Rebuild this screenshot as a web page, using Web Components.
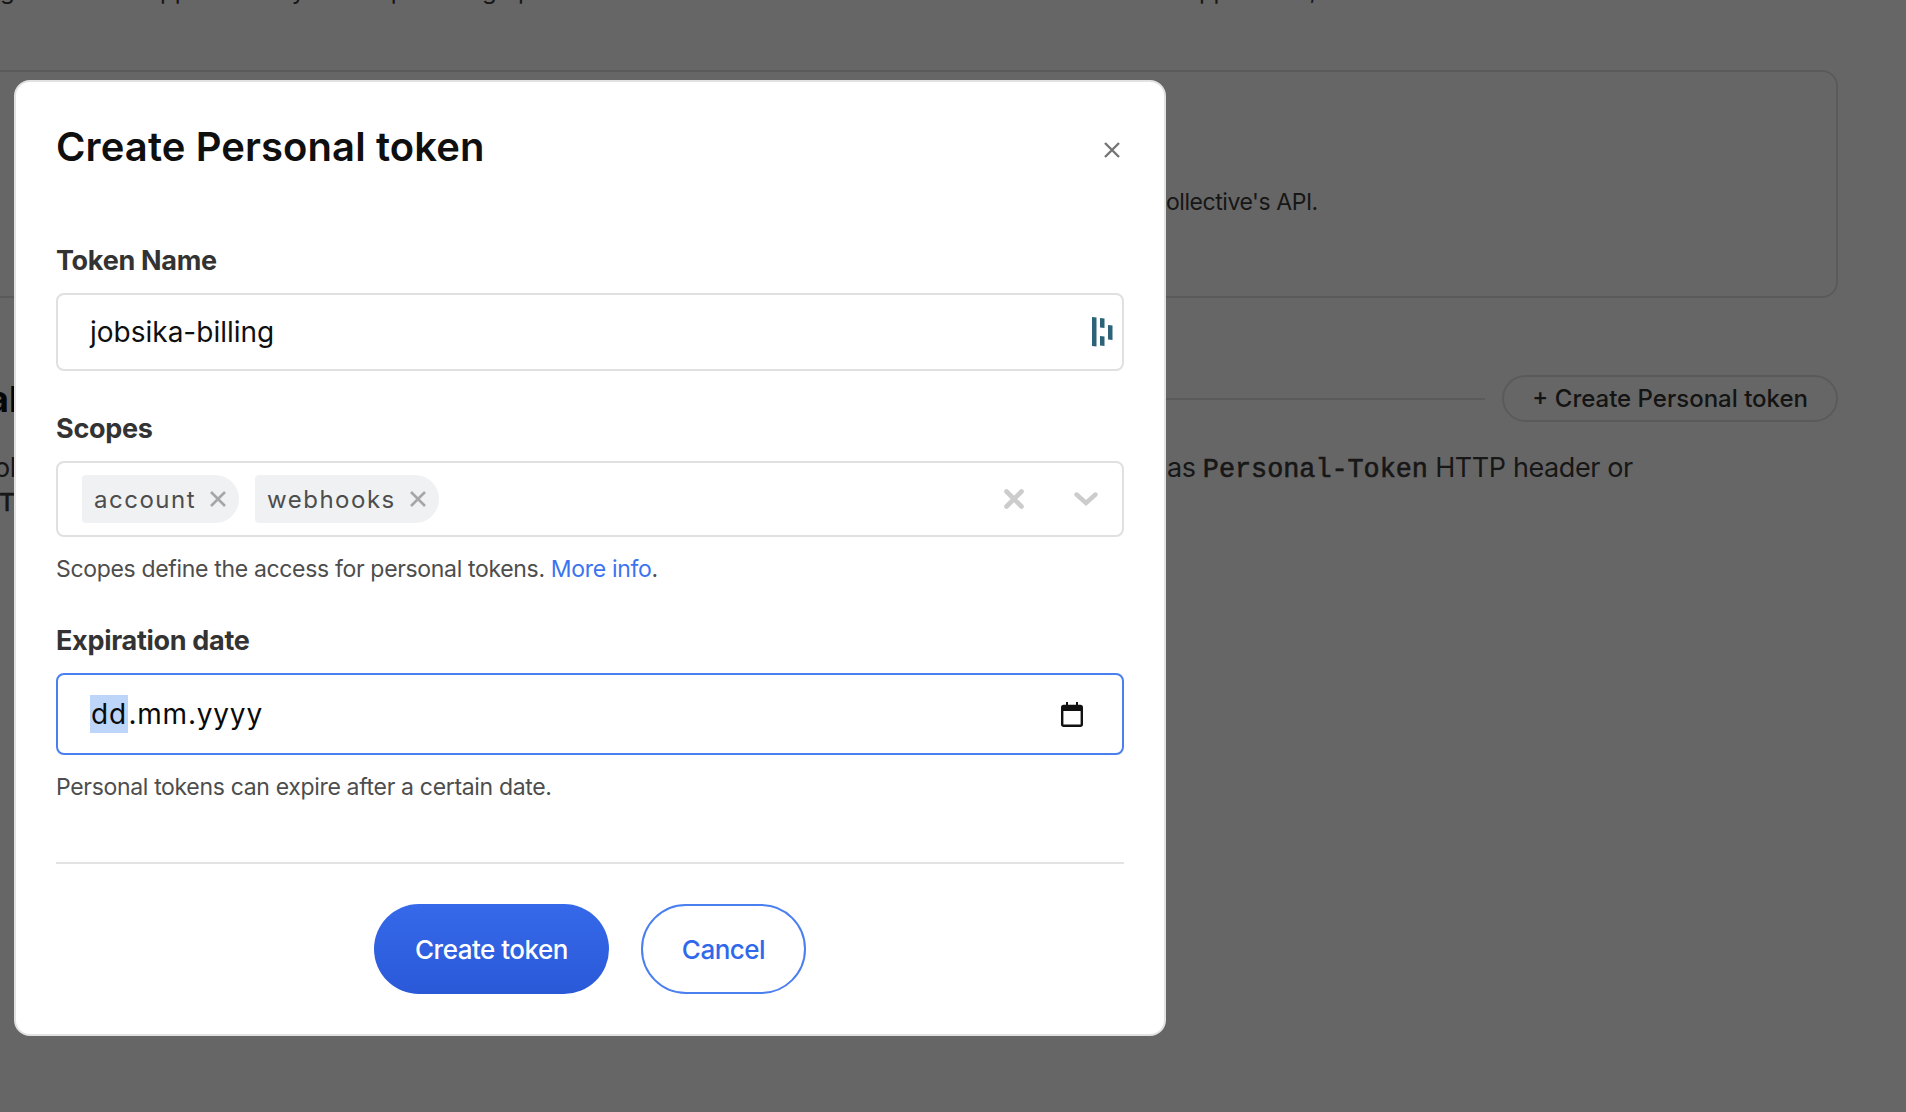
<!DOCTYPE html>
<html>
<head>
<meta charset="utf-8">
<title>Create Personal token</title>
<style>
    html, body { margin: 0; height: 100%; overflow: hidden; background: #fff; }
    body { font-family: Inter, "Liberation Sans", sans-serif; }
    a { color: #3c74ef; text-decoration: none; }
</style>
</head>
<body>
<settings-page></settings-page>
<modal-overlay>
    <token-dialog heading="Create Personal token">
        <form-field label="Token Name">
            <text-box value="jobsika-billing"></text-box>
        </form-field>
        <form-field label="Scopes" style="--gap-top: 40px">
            <scope-select></scope-select>
            <span slot="hint">Scopes define the access for personal tokens. <a href="#">More info</a>.</span>
        </form-field>
        <form-field label="Expiration date" style="--gap-top: 38px">
            <date-box></date-box>
            <span slot="hint">Personal tokens can expire after a certain date.</span>
        </form-field>
    </token-dialog>
</modal-overlay>

<script>
class SettingsPage extends HTMLElement{
    constructor(){
        super()
        this.shadow = this.attachShadow({ mode: "open" })
        this.shadow.innerHTML = `
        <style>
            :host {
                display: block;
                height: 1112px;
                overflow: hidden;
                font-family: Inter, "Liberation Sans", sans-serif;
                color: #3a3a3a;
                font-size: 24px;
                letter-spacing: -0.4px;
            }
            .inner { width: 1838px; margin-top: -27px; }
            .intro { line-height: 36px; white-space: nowrap; letter-spacing: 0; }
            .intro a { color: #5a5fd0; }
            .card {
                margin: 61px 0 0 -60px;
                height: 228px;
                box-sizing: border-box;
                border: 2px solid #e1e1e1;
                border-radius: 16px;
                padding: 112px 0 0 1224px;
                line-height: 36px;
                font-size: 23px;
                letter-spacing: -0.45px;
            }
            .head {
                display: grid;
                grid-template-columns: 1166px 1fr auto;
                align-items: center;
                column-gap: 17px;
                margin-top: 77px;
            }
            .head h2 { margin: 0 0 0 -12px; font-size: 36px; font-weight: 700; color: #111; letter-spacing: 0; }
            .head .line { height: 2px; background: #e1e1e1; margin-left: -17px; }
            .add {
                height: 47px;
                box-sizing: border-box;
                padding: 0 28px;
                display: flex;
                align-items: center;
                border: 2px solid #e1e1e1;
                border-radius: 30px;
                font-weight: 500;
                letter-spacing: 0;
                white-space: nowrap;
                color: #333;
            }
            .row {
                display: grid;
                grid-template-columns: 1167px 1fr;
                line-height: 38px;
                margin-top: 27px;
                font-size: 27px;
                letter-spacing: -0.4px;
            }
            .row span.ol { margin-left: -6px; }
            .tail { white-space: nowrap; }
            code {
                font-family: "Liberation Mono", monospace;
                font-size: 26.8px;
                letter-spacing: 0;
                -webkit-text-stroke: 0.6px currentColor;
            }
            .next { line-height: 28px; margin-left: -1px; }
        </style>
        <div class="inner">
            <div class="intro">g to build an application by others providing open source code. Create a new token to let others use this application, then <a>read the docs</a></div>
            <div class="card">ollective's API.</div>
            <div class="head"><h2>al</h2><div class="line"></div><div class="add">+ Create Personal token</div></div>
            <div class="row"><span class="ol">ol</span><span class="tail">as <code>Personal-Token</code> HTTP header or</span></div>
            <div class="next"><code>T</code></div>
        </div>
        `
    }
}
customElements.define("settings-page", SettingsPage)

class ModalOverlay extends HTMLElement{
    constructor(){
        super()
        this.shadow = this.attachShadow({ mode: "open" })
        this.shadow.innerHTML = `
        <style>
            :host {
                position: fixed;
                inset: 0;
                background: rgba(0, 0, 0, 0.6);
                display: block;
                padding: 80px 0 0 14px;
                box-sizing: border-box;
            }
        </style>
        <slot></slot>
        `
    }
}
customElements.define("modal-overlay", ModalOverlay)

class TokenDialog extends HTMLElement{
    constructor(){
        super()
        this.shadow = this.attachShadow({ mode: "open" })
        this.shadow.innerHTML = `
        <style>
            :host {
                display: block;
                width: 1152px;
                height: 956px;
                box-sizing: border-box;
                background: #fff;
                border: 2px solid #e2e2e2;
                border-radius: 16px;
                padding: 0 40px;
                font-family: Inter, "Liberation Sans", sans-serif;
            }
            header { display: flex; justify-content: space-between; height: 161px; padding-top: 41px; box-sizing: border-box; }
            h1 { margin: 0; font-size: 40px; line-height: 48px; font-weight: 600; color: #0f0f0f; letter-spacing: 0.1px; }
            .close { margin: 19px 4px 0 0; width: 16px; height: 16px; }
            .fields { height: 621px; border-bottom: 2px solid #e3e3e3; box-sizing: border-box; }
            footer { display: flex; justify-content: center; gap: 32px; padding-top: 40px; }
            .btn {
                height: 90px;
                box-sizing: border-box;
                border-radius: 45px;
                display: flex;
                align-items: center;
                font-size: 26px;
                font-weight: 500;
                letter-spacing: -0.5px;
            }
            .primary { width: 235px; justify-content: center; color: #fff; background: linear-gradient(180deg, #3569ea, #2a59d8); }
            .secondary { width: 165px; justify-content: center; color: #3068ec; border: 2px solid #4a7ff0; background: #fff; }
        </style>
        <header>
            <h1></h1>
            <svg class="close" viewBox="0 0 16 16" fill="none" stroke="#757575" stroke-width="2.4"><path d="M1 1l14 14M15 1L1 15"/></svg>
        </header>
        <div class="fields"><slot></slot></div>
        <footer>
            <div class="btn primary">Create token</div>
            <div class="btn secondary">Cancel</div>
        </footer>
        `
    }

    connectedCallback(){
        this.shadow.querySelector("h1").textContent = this.getAttribute("heading")
    }
}
customElements.define("token-dialog", TokenDialog)

class FormField extends HTMLElement{
    constructor(){
        super()
        this.shadow = this.attachShadow({ mode: "open" })
        this.shadow.innerHTML = `
        <style>
            :host { display: block; padding-top: var(--gap-top, 0); }
            label {
                display: block;
                font-size: 27px;
                line-height: 36px;
                font-weight: 700;
                color: #333;
                letter-spacing: -0.3px;
                margin-bottom: 14px;
            }
            .hint {
                margin-top: 16px;
                font-size: 23px;
                line-height: 32px;
                color: #4d4d4d;
                letter-spacing: -0.33px;
            }
        </style>
        <label></label>
        <slot></slot>
        <div class="hint"><slot name="hint"></slot></div>
        `
    }

    connectedCallback(){
        this.shadow.querySelector("label").textContent = this.getAttribute("label")
        // fields without a hint shouldn't keep its margin
        if(!this.querySelector('[slot="hint"]')) this.shadow.querySelector(".hint").remove()
    }
}
customElements.define("form-field", FormField)

class TextBox extends HTMLElement{
    constructor(){
        super()
        this.shadow = this.attachShadow({ mode: "open" })
        this.shadow.innerHTML = `
        <style>
            :host {
                display: flex;
                align-items: center;
                justify-content: space-between;
                height: 78px;
                box-sizing: border-box;
                border: 2px solid #e0e0e0;
                border-radius: 8px;
                padding: 0 9px 0 32px;
                font-size: 28px;
                color: #0f0f0f;
            }
        </style>
        <span class="value"></span>
        <svg width="21" height="30" viewBox="0 0 21 30" fill="#2d6379">
            <path d="M0 0l4.500 .6V29.500L0 29zM8 1l4.500 .6V11L8 10.500zM8 19l4.500 .6V29L8 28.500zM16 8l4.500 .6V23L16 22.500z"/>
        </svg>
        `
    }

    connectedCallback(){
        this.shadow.querySelector(".value").textContent = this.getAttribute("value")
    }
}
customElements.define("text-box", TextBox)

class ScopeTag extends HTMLElement{
    constructor(){
        super()
        this.shadow = this.attachShadow({ mode: "open" })
        this.shadow.innerHTML = `
        <style>
            :host {
                display: flex;
                align-items: center;
                height: 48px;
                padding: 0 13px 0 12px;
                gap: 14px;
                background: #f0f1f3;
                border-radius: 4px 24px 24px 4px;
                font-size: 24px;
                letter-spacing: 1.5px;
                color: #4d4d4d;
            }
        </style>
        <slot></slot>
        <svg width="16" height="16" viewBox="0 0 16 16" fill="none" stroke="#a6a6a6" stroke-width="2.6"><path d="M1 1l14 14M15 1L1 15"/></svg>
        `
    }
}
customElements.define("scope-tag", ScopeTag)

class ScopeSelect extends HTMLElement{
    constructor(){
        super()
        this.shadow = this.attachShadow({ mode: "open" })
        this.shadow.innerHTML = `
        <style>
            :host {
                display: flex;
                align-items: center;
                height: 76px;
                box-sizing: border-box;
                border: 2px solid #e0e0e0;
                border-radius: 8px;
                padding: 0 24px 0 24px;
                gap: 16px;
            }
            .spacer { flex: 1; }
            .x { margin-right: 34px; }
        </style>
        <scope-tag>account</scope-tag>
        <scope-tag>webhooks</scope-tag>
        <div class="spacer"></div>
        <svg class="x" width="20" height="20" viewBox="0 0 20 20" fill="none" stroke="#cccccc" stroke-width="4.600" stroke-linecap="round"><path d="M2.500 2.500l15 15M17.500 2.500l-15 15"/></svg>
        <svg width="24" height="14" viewBox="0 0 24 14" fill="none" stroke="#cccccc" stroke-width="4.400" stroke-linecap="round"><path d="M2.500 2.500l9.500 8.500 9.500-8.500"/></svg>
        `
    }
}
customElements.define("scope-select", ScopeSelect)

class DateBox extends HTMLElement{
    constructor(){
        super()
        this.shadow = this.attachShadow({ mode: "open" })
        this.shadow.innerHTML = `
        <style>
            :host {
                display: flex;
                align-items: center;
                justify-content: space-between;
                height: 82px;
                box-sizing: border-box;
                border: 2px solid #4a7ff0;
                border-radius: 8px;
                padding: 0 39px 0 32px;
                font-size: 28px;
                color: #0a0a0a;
                letter-spacing: 0.8px;
            }
            .sel { background: #bcd5f9; padding: 2px 1.500px 2px 1px; }
        </style>
        <span><span class="sel">dd</span>.mm.yyyy</span>
        <svg width="22" height="25" viewBox="0 0 22 25" fill="none">
            <rect x="1.200" y="4" width="19.600" height="19.800" rx="1.500" stroke="#111" stroke-width="2.400"/>
            <rect x="1" y="4" width="20" height="5" fill="#111"/>
            <path d="M6 0v5M16 0v5" stroke="#111" stroke-width="2"/>
        </svg>
        `
    }
}
customElements.define("date-box", DateBox)
</script>
</body>
</html>
